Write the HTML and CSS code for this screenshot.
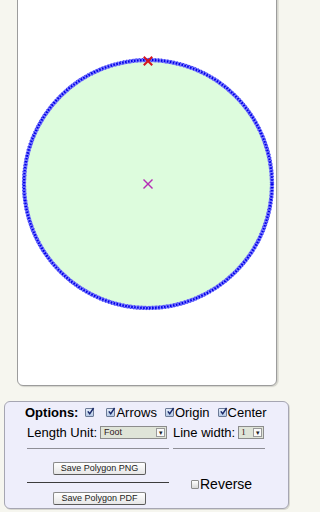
FILE: index.html
```html
<!DOCTYPE html>
<html>
<head>
<meta charset="utf-8">
<link rel="stylesheet" href="styles.css">
</head>
<body>
<div class="page">
  <div class="canvas-panel">
    <svg class="drawing" width="258" height="394" viewBox="0 0 258 394">
      <circle cx="130" cy="193" r="124" fill="#ddfcdd"/>
      <circle cx="130" cy="193" r="124" fill="none" stroke="#8080ff" stroke-width="4"/>
      <circle cx="130" cy="193" r="124" fill="none" stroke="#0000e6" stroke-width="2.2" stroke-dasharray="1.6 1.4"/>
      <circle cx="130" cy="193" r="125.6" fill="none" stroke="#1a1af0" stroke-width="0.9" stroke-dasharray="1 2.2"/>
      <circle cx="130" cy="193" r="122.4" fill="none" stroke="#3030f0" stroke-width="0.9" stroke-dasharray="1 2.6"/>
      <g stroke="#d4141e" stroke-width="2" stroke-linecap="square">
        <line x1="126.5" y1="66.5" x2="133.5" y2="73.5"/>
        <line x1="133.5" y1="66.5" x2="126.5" y2="73.5"/>
      </g>
      <g stroke="#b52cb5" stroke-width="1.4">
        <line x1="125.5" y1="188.5" x2="134.5" y2="197.5"/>
        <line x1="134.5" y1="188.5" x2="125.5" y2="197.5"/>
      </g>
    </svg>
  </div>

  <div class="options-panel">
    <div class="row-options">
      <span class="label-bold">Options:</span>
      <span class="cb checked cb-solo"><svg width="9" height="9" viewBox="0 0 9 9"><path d="M1.8 4.4 L3.7 6.8 L7.6 1" fill="none" stroke="#1a2a6a" stroke-width="1.5"/></svg></span>
      <span class="opt"><span class="cb checked"><svg width="9" height="9" viewBox="0 0 9 9"><path d="M1.8 4.4 L3.7 6.8 L7.6 1" fill="none" stroke="#1a2a6a" stroke-width="1.5"/></svg></span>Arrows</span>
      <span class="opt"><span class="cb checked"><svg width="9" height="9" viewBox="0 0 9 9"><path d="M1.8 4.4 L3.7 6.8 L7.6 1" fill="none" stroke="#1a2a6a" stroke-width="1.5"/></svg></span>Origin</span>
      <span class="opt"><span class="cb checked"><svg width="9" height="9" viewBox="0 0 9 9"><path d="M1.8 4.4 L3.7 6.8 L7.6 1" fill="none" stroke="#1a2a6a" stroke-width="1.5"/></svg></span>Center</span>
    </div>

    <div class="grid">
      <div class="row-select">
        <span class="label">Length Unit:</span>
        <span class="select select-unit"><span class="select-text">Foot</span><span class="select-arrow">&#9662;</span></span>
      </div>
      <div class="row-select">
        <span class="label">Line width:</span>
        <span class="select select-width"><span class="select-text serif">1</span><span class="select-arrow">&#9662;</span></span>
      </div>

      <div class="rule light"></div>
      <div class="rule light"></div>

      <div class="col-buttons">
        <button class="btn">Save Polygon PNG</button>
        <div class="rule dark"></div>
        <button class="btn">Save Polygon PDF</button>
      </div>
      <div class="col-reverse">
        <span class="cb plain"></span><span class="label-lg">Reverse</span>
      </div>
    </div>
  </div>
</div>
</body>
</html>
```

FILE: styles.css
```css
html {
  background: #f6f6ef;
}
html, body {
  margin: 0;
  padding: 0;
}
body {
  background: #f6f6ef;
  font-family: "Liberation Sans", Arial, sans-serif;
  color: #000;
  width: 296px;
  height: 512px;
  overflow: hidden;
}
.page {
  display: flex;
  flex-direction: column;
}
.canvas-panel {
  margin: -10px 0 0 17px;
  width: 258px;
  height: 394px;
  background: #fff;
  border: 1px solid #9c9c9c;
  border-radius: 0 0 6px 6px;
  box-shadow: 1px 1px 1px #d4d4cc, 2px 0 0 #e4e4dc;
  overflow: hidden;
}
.drawing {
  display: block;
}
.options-panel {
  margin: 15px 0 0 4px;
  width: 283px;
  height: 106px;
  background: #eeeefb;
  border: 1px solid #a6a6b2;
  border-radius: 6px;
  box-shadow: 1px 1px 0 #d8d8d0;
}
.row-options {
  display: flex;
  align-items: center;
  height: 16px;
  margin-top: 2px;
  padding-left: 20px;
  font-size: 13px;
}
.label-bold {
  font-weight: bold;
  font-size: 13px;
  margin-right: 7px;
}
.cb {
  display: inline-flex;
  align-items: center;
  justify-content: center;
  width: 7px;
  height: 7px;
  border: 1px solid #6c7a96;
  background: linear-gradient(#e6eefa, #b4c8e6);
  border-radius: 1px;
  margin-right: 1px;
}
.cb svg {
  display: block;
  flex: none;
  margin: -2px -2px 0 0;
}
.cb-solo {
  margin-right: 12px;
}
.opt {
  display: inline-flex;
  align-items: center;
  margin-right: 8px;
}
.cb.plain {
  background: linear-gradient(#ffffff, #d8d8d8);
  border-color: #8c8c8c;
  width: 6px;
  height: 7px;
}
.grid {
  display: grid;
  grid-template-columns: 142px 92px;
  column-gap: 4px;
  padding-left: 22px;
  margin-top: 4px;
}
.row-select {
  display: flex;
  align-items: center;
  height: 16px;
  font-size: 13px;
}
.label {
  margin-right: 3px;
}
.select {
  display: inline-flex;
  align-items: stretch;
  height: 11px;
  border: 1px solid #8c8c8c;
  background: #dfe4d8;
}
.select-unit {
  width: 65px;
}
.select-width {
  width: 24px;
}
.select-text {
  flex: 1;
  font-size: 9px;
  line-height: 11px;
  color: #301818;
  padding-left: 3px;
}
.select-text.serif {
  font-family: "Liberation Serif", serif;
  font-size: 9px;
  padding-left: 2px;
}
.select-arrow {
  width: 9px;
  margin: 1px 1px 1px 0;
  background: #fafafa;
  border: 1px solid #9a9a9a;
  box-sizing: border-box;
  font-size: 7px;
  line-height: 8px;
  text-align: center;
  color: #222;
}
.rule {
  height: 1px;
}
.rule.light {
  margin-top: 8px;
  background: #8e8e96;
}
.rule.dark {
  background: #3c3c3c;
  margin: 7px 0 9px 0;
}
.col-buttons {
  display: flex;
  flex-direction: column;
  align-items: center;
  padding-top: 13px;
}
.col-buttons .rule.dark {
  align-self: stretch;
}
.btn {
  display: block;
  width: 93px;
  height: 13px;
  padding: 0;
  margin: 0 0 0 3px;
  font-family: "Liberation Sans", Arial, sans-serif;
  font-size: 9px;
  line-height: 11px;
  color: #222;
  border: 1px solid #8a8a8a;
  border-right-color: #606060;
  border-bottom-color: #5a5a5a;
  border-radius: 2px;
  background: linear-gradient(#ffffff, #e6e6e6);
}
.col-reverse {
  display: flex;
  align-items: center;
  padding-left: 18px;
  padding-top: 27px;
  height: 16px;
}
.label-lg {
  font-size: 14px;
}
```
